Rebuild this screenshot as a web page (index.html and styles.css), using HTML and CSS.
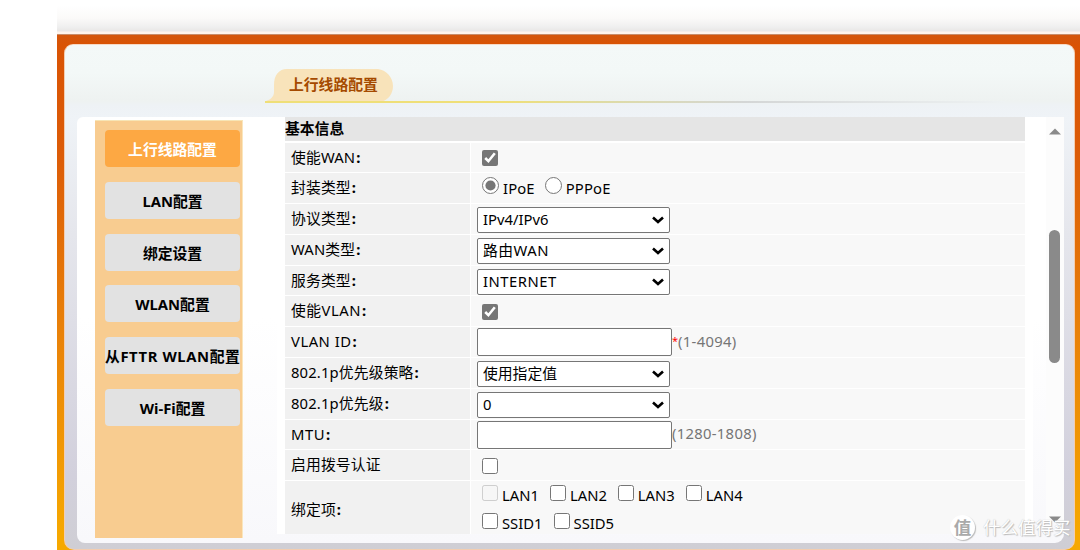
FILE: index.html
```html
<!DOCTYPE html>
<html lang="zh-CN">
<head>
  <meta charset="UTF-8">
  <meta name="viewport" content="width=device-width, initial-scale=1.0">
  <title>上行线路配置</title>
  <link rel="stylesheet" href="styles.css">
</head>
<body>
  <div class="top-shade"></div>

  <div class="frame">
    <div class="panel">
      <header class="tab-bar">
        <svg class="tab-shape" width="128" height="33" viewBox="0 0 128 33">
          <path d="M0 32.500 C5 31 9 28 9 23 L9 16 C9 6 14 0 22 0 H113 C121 1 128 8 128 17 C128 25 123 31 117 32.500 Z" fill="#f8e3ba"/>
        </svg>
        <h1>上行线路配置</h1>
        <div class="tab-line"></div>
      </header>

      <div class="content">
        <nav class="menu">
          <a href="#" class="active">上行线路配置</a>
          <a href="#">LAN配置</a>
          <a href="#">绑定设置</a>
          <a href="#">WLAN配置</a>
          <a href="#" class="long">从FTTR WLAN配置</a>
          <a href="#">Wi-Fi配置</a>
        </nav>

        <form class="settings">
          <h2>基本信息</h2>
          <div class="row">
            <label>使能WAN<b>:</b></label>
            <div class="value"><input type="checkbox" checked></div>
          </div>
          <div class="row">
            <label>封装类型<b>:</b></label>
            <div class="value radios">
              <span class="option"><input type="radio" name="encap" checked>IPoE</span>
              <span class="option"><input type="radio" name="encap">PPPoE</span>
            </div>
          </div>
          <div class="row">
            <label>协议类型<b>:</b></label>
            <div class="value">
              <div class="select"><select><option>IPv4/IPv6</option></select><svg width="12" height="8" viewBox="0 0 12 8"><path d="M1 1.500 L6 6 L11 1.500"/></svg></div>
            </div>
          </div>
          <div class="row">
            <label>WAN类型<b>:</b></label>
            <div class="value">
              <div class="select wide-text"><select><option>路由WAN</option></select><svg width="12" height="8" viewBox="0 0 12 8"><path d="M1 1.500 L6 6 L11 1.500"/></svg></div>
            </div>
          </div>
          <div class="row">
            <label>服务类型<b>:</b></label>
            <div class="value">
              <div class="select wide-text"><select><option>INTERNET</option></select><svg width="12" height="8" viewBox="0 0 12 8"><path d="M1 1.500 L6 6 L11 1.500"/></svg></div>
            </div>
          </div>
          <div class="row">
            <label class="wide-text">使能VLAN<b>:</b></label>
            <div class="value"><input type="checkbox" checked></div>
          </div>
          <div class="row">
            <label class="wide-text">VLAN ID<b>:</b></label>
            <div class="value"><input type="text"><span class="required">*</span><span class="hint">(1-4094)</span></div>
          </div>
          <div class="row">
            <label>802.1p优先级策略<b>:</b></label>
            <div class="value">
              <div class="select"><select><option>使用指定值</option></select><svg width="12" height="8" viewBox="0 0 12 8"><path d="M1 1.500 L6 6 L11 1.500"/></svg></div>
            </div>
          </div>
          <div class="row">
            <label>802.1p优先级<b>:</b></label>
            <div class="value">
              <div class="select"><select><option>0</option></select><svg width="12" height="8" viewBox="0 0 12 8"><path d="M1 1.500 L6 6 L11 1.500"/></svg></div>
            </div>
          </div>
          <div class="row">
            <label class="wide-text">MTU<b>:</b></label>
            <div class="value"><input type="text"><span class="hint">(1280-1808)</span></div>
          </div>
          <div class="row">
            <label>启用拨号认证</label>
            <div class="value"><input type="checkbox"></div>
          </div>
          <div class="row tall">
            <label>绑定项<b>:</b></label>
            <div class="value bindings">
              <div class="line">
                <span class="option"><input type="checkbox" disabled>LAN1</span>
                <span class="option"><input type="checkbox">LAN2</span>
                <span class="option"><input type="checkbox">LAN3</span>
                <span class="option"><input type="checkbox">LAN4</span>
              </div>
              <div class="line">
                <span class="option"><input type="checkbox">SSID1</span>
                <span class="option"><input type="checkbox">SSID5</span>
              </div>
            </div>
          </div>
        </form>

        <div class="scrollbar">
          <svg width="12" height="7" viewBox="0 0 12 7"><path d="M6 0.500 L12 6.500 H0 Z" fill="#8a8a8a"/></svg>
          <div class="thumb"></div>
          <svg class="down" width="12" height="7" viewBox="0 0 12 7"><path d="M0 0.500 H12 L6 6.500 Z" fill="#8a8a8a"/></svg>
        </div>
      </div>
    </div>
  </div>

  <div class="watermark"><span class="logo">值</span><span>什么值得买</span></div>
</body>
</html>
```

FILE: styles.css
```css
* {
    margin: 0;
    padding: 0;
    box-sizing: border-box;
}

body {
    height: 550px;
    overflow: hidden;
    background: #fff;
    font-family: "Noto Sans", "Noto Sans CJK SC", sans-serif;
    font-size: 14.8px;
    color: #000;
    white-space: nowrap;
}

/* Soft grey strip above the frame */
.top-shade {
    height: 34px;
    margin-left: 57px;
    background: linear-gradient(#fff 5px, #fbfaf9 18px, #efefef 27px, #e9e7e6 31px, #fff4ec 32px);
}

.frame {
    height: 516px;
    margin-left: 57px;
    padding: 9px 5px 0 7px;
    background: linear-gradient(#d4560c, #d95304 10px, #dc5c08 120px, #e98209 300px, #f6a800 500px);
    border-top: 1px solid #c88d6b;
}

.panel {
    height: 506px;
    border: 1px solid #f3cdb0;
    border-top-color: #f7dac6;
    border-radius: 9px 9px 10px 10px;
    background: linear-gradient(#f4f9f8, #f3f8f7 28px, #eef2f1 56px, #eef2f5 60px, #eff3f7 72px, #e5e6ec 190px, #d2d0dc 430px, #cfced4);
    overflow: hidden;
}

/* Page title tab */
.tab-bar {
    height: 72px;
    padding: 24px 0 0 200px;
    display: grid;
    grid-template-columns: 128px 1fr;
    grid-template-rows: 32px 2px;
}

.tab-shape {
    grid-area: 1 / 1;
}

.tab-bar h1 {
    grid-area: 1 / 1;
    padding-left: 24px;
    font-size: 14.8px;
    line-height: 31px;
    color: #a54a00;
}

.tab-line {
    grid-area: 2 / 1 / 3 / 3;
    width: 740px;
    background: linear-gradient(90deg, #efdf78 240px, #dedba5 340px, #d4d6d6 480px, #eef2f3 740px);
}

/* White content area */
.content {
    display: flex;
    width: 987px;
    height: 426px;
    margin-left: 12px;
    padding: 0 0 9px 18px;
    background: linear-gradient(#fff 0, #fff 200px, #f8f8fb 426px);
    border-radius: 6px 0 9px 8px;
}

/* Left menu */
.menu {
    width: 148px;
    height: 418px;
    margin-top: 3px;
    padding: 9px 2px 0 10px;
    display: flex;
    flex-direction: column;
    gap: 14.800px;
    background: #f8cc90;
    border-top: 1px solid #f7e5b5;
    border-right: 1px solid #fae6bd;
}

.menu a {
    height: 37px;
    line-height: 38px;
    border-radius: 4px;
    background: #e2e2e2;
    color: #000;
    font-weight: bold;
    text-align: center;
    text-decoration: none;
}

.menu a.active {
    background: #fda843;
    color: #fff;
}

.menu a.long {
    letter-spacing: 0.6px;
}

/* Settings table */
.settings {
    width: 740px;
    height: 417px;
    margin-left: 42px;
    outline: 8px solid #fff;
    background: #fff;
    clip-path: inset(0 -8px 0 -8px);
}

.settings h2 {
    height: 24px;
    line-height: 22px;
    margin-bottom: 1.500px;
    font-size: 14.8px;
    background: #e5e5e5;
}

.row {
    display: grid;
    grid-template-columns: 185px 1fr;
    gap: 1px;
    height: 29.800px;
    margin-bottom: 1px;
}

.row label {
    padding-left: 6px;
    line-height: 28px;
    background: #f1f1f1;
    letter-spacing: 0.15px;
}

.row label b {
    margin-left: 1px;
}

.wide-text,
.row label.wide-text {
    letter-spacing: 0.5px;
}

.value {
    display: flex;
    align-items: center;
    padding-left: 6px;
    background: #f8f8f8;
}

input[type="checkbox"],
input[type="radio"] {
    width: 16px;
    height: 16px;
    margin: 1px 0 0 5px;
    accent-color: #767676;
}

.option {
    display: flex;
    align-items: center;
}

.option input {
    margin-right: 4px;
}

.radios {
    padding-bottom: 1px;
    letter-spacing: 0.15px;
}

.radios input[type="radio"] {
    width: 17px;
    height: 17px;
    margin-top: -4px;
}

.radios .option + .option {
    margin-left: 5px;
}

input[type="text"] {
    width: 195px;
    height: 28px;
    border: 1px solid #767676;
    border-radius: 2px;
    background: #fff;
}

.select {
    display: flex;
    align-items: center;
    width: 193px;
    height: 26px;
    margin-top: 2px;
    padding-right: 5px;
    border: 1px solid #767676;
    border-radius: 2px;
    background: #fff;
}

.select select {
    flex: 1;
    height: 24px;
    padding: 0 0 2px 5px;
    appearance: none;
    border: none;
    background: none;
    color: #000;
    font: inherit;
    letter-spacing: inherit;
}

.select path {
    fill: none;
    stroke: #000;
    stroke-width: 2.600;
}

.required {
    color: #f00;
    font-size: 11px;
}

.required,
.hint {
    margin-top: -3px;
}

.hint {
    color: #757575;
    letter-spacing: 0.3px;
}

.row.tall {
    height: 54px;
    margin-bottom: 0;
}

.row.tall label {
    line-height: 57px;
}

.bindings {
    flex-direction: column;
    align-items: flex-start;
}

.line {
    display: flex;
    height: 29px;
    gap: 6px;
    margin-top: -1px;
}

.bindings input {
    margin-top: -3px;
}

/* Scrollbar on the right side */
.scrollbar {
    display: flex;
    flex-direction: column;
    align-items: center;
    width: 18px;
    height: 406px;
    margin-left: auto;
    padding: 11px 1px 0 0;
    background: #fcfcfc;
}

.thumb {
    width: 11px;
    height: 133px;
    margin-top: 95px;
    border-radius: 6px;
    background: #8a8a8a;
}

.scrollbar .down {
    margin-top: auto;
}

/* Watermark over the corner */
.watermark {
    position: absolute;
    left: 950px;
    top: 515px;
    display: flex;
    align-items: center;
    gap: 8px;
    font-size: 17.500px;
    line-height: 25px;
    color: #fff;
    text-shadow: 1px 1px 1px #bbb, 0 0 1px #bbb;
}

.watermark .logo {
    width: 25px;
    height: 25px;
    border-radius: 50%;
    background: #fff;
    box-shadow: 1px 1px 1px #bbb;
    color: #aaa;
    font-weight: bold;
    text-align: center;
    text-shadow: none;
}
```
